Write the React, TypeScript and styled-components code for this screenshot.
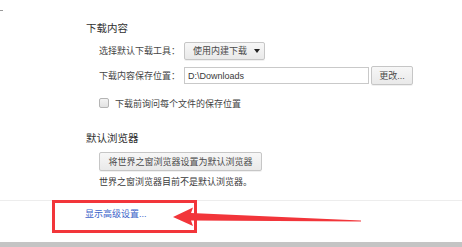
import React from "react";
import styled, { createGlobalStyle } from "styled-components";

const Global = createGlobalStyle`
  html, body { margin: 0; padding: 0; background: #ffffff; }
  body { font-family: "Liberation Sans", "Noto Sans CJK SC", sans-serif; }
`;

const Page = styled.div`
  position: relative;
  width: 462px;
  height: 247px;
  overflow: hidden;
  background: #fff;
  display: flex;
  flex-direction: column;
  color: #444;
  font-size: 9px;
`;

const TopMark = styled.div`
  margin-top: 10px;
  width: 3px;
  height: 1px;
  background: #9a9a9a;
`;

const Section = styled.section`
  padding-left: 86px;
  display: flex;
  flex-direction: column;
`;

const Heading = styled.h3<{ $top: number }>`
  margin: ${(p) => p.$top}px 0 0 0;
  font-size: 10.5px;
  font-weight: normal;
  line-height: 14px;
  height: 14px;
  color: #303030;
`;

const Indent = styled.div<{ $top: number; $h: number }>`
  margin-top: ${(p) => p.$top}px;
  margin-left: 13px;
  height: ${(p) => p.$h}px;
  display: flex;
  align-items: center;
`;

const Label = styled.span`
  width: 85px;
  line-height: 12px;
  color: #454545;
  white-space: nowrap;
`;

const Button = styled.button<{ $w: number; $h: number }>`
  box-sizing: border-box;
  width: ${(p) => p.$w}px;
  height: ${(p) => p.$h}px;
  padding: 0 4px 0 8px;
  border: 1px solid #c6c6c6;
  border-radius: 2px;
  background: linear-gradient(#f7f7f7, #e9e9e9);
  color: #4a4a4a;
  font: inherit;
  font-size: 9px;
  line-height: 12px;
  display: flex;
  align-items: center;
  justify-content: space-between;
  white-space: nowrap;
  box-shadow: 0 1px 0 rgba(0, 0, 0, 0.06);
`;

const CenterButton = styled(Button)`
  justify-content: center;
  padding: 0 6px;
`;

const Caret = styled.span`
  width: 0;
  height: 0;
  border-left: 3px solid transparent;
  border-right: 3px solid transparent;
  border-top: 4px solid #222;
`;

const Input = styled.div`
  box-sizing: border-box;
  width: 185px;
  height: 17px;
  border: 1px solid #c9c9c9;
  background: #fff;
  padding-left: 3px;
  display: flex;
  align-items: center;
  color: #3a3a3a;
  margin-right: 2px;
`;

const Check = styled.span`
  box-sizing: border-box;
  width: 10px;
  height: 10px;
  border: 1px solid #b4b4b4;
  border-radius: 2px;
  background: linear-gradient(#f3f3f3, #e2e2e2);
  margin-right: 6px;
`;

const Status = styled.div`
  margin: 5px 0 0 13px;
  line-height: 12px;
  height: 12px;
  color: #3a3a3a;
`;

const Footer = styled.div`
  margin-top: 12px;
  border-top: 1px solid #ededed;
  padding-left: 52px;
  display: flex;
`;

const RedBox = styled.div`
  box-sizing: border-box;
  margin-top: -1px;
  width: 145px;
  height: 33px;
  border: 3px solid #f2353a;
  padding: 5px 0 0 30px;
`;

const Link = styled.a`
  color: #3b63c9;
  line-height: 12px;
  text-decoration: none;
  cursor: pointer;
`;

const Spacer = styled.div`
  flex: 1;
`;

const BottomBar = styled.div`
  height: 5px;
  background: #c4c4c4;
`;

const Arrow = styled.svg`
  position: absolute;
  left: 170px;
  top: 204px;
  width: 200px;
  height: 25px;
`;

export default function App() {
  return (
    <>
      <Global />
      <Page>
        <TopMark />
        <Section>
          <Heading $top={10}>下载内容</Heading>
          <Indent $top={7} $h={18}>
            <Label>选择默认下载工具：</Label>
            <Button $w={81} $h={18}>
              使用内建下载
              <Caret />
            </Button>
          </Indent>
          <Indent $top={6} $h={19}>
            <Label>下载内容保存位置：</Label>
            <Input>D:\Downloads</Input>
            <CenterButton $w={42} $h={19}>更改...</CenterButton>
          </Indent>
          <Indent $top={12} $h={12}>
            <Check />
            <span>下载前询问每个文件的保存位置</span>
          </Indent>
          <Heading $top={22}>默认浏览器</Heading>
          <Indent $top={7} $h={19}>
            <CenterButton $w={163} $h={19}>将世界之窗浏览器设置为默认浏览器</CenterButton>
          </Indent>
          <Status>世界之窗浏览器目前不是默认浏览器。</Status>
        </Section>
        <Footer>
          <RedBox>
            <Link>显示高级设置...</Link>
          </RedBox>
        </Footer>
        <Spacer />
        <BottomBar />
        <Arrow viewBox="170 204 200 25">
          <polygon
            points="173,217 193,207.5 191,213 361,220.6 361,221.6 191,220.5 193,226"
            fill="#f2353a"
          />
        </Arrow>
      </Page>
    </>
  );
}
